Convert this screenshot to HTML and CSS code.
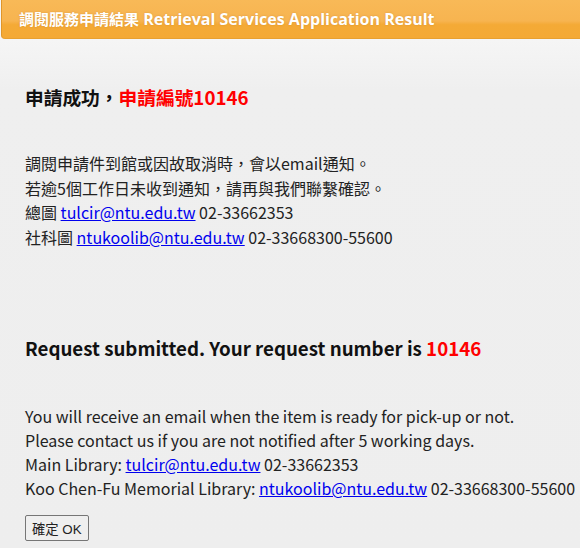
FILE: index.html
```html
<!DOCTYPE html>
<html lang="zh-Hant">
<head>
<meta charset="utf-8">
<title>調閱服務申請結果</title>
<link rel="stylesheet" href="styles.css">
</head>
<body>
<div class="page">
  <div class="header"><span class="zh">調閱服務申請結果</span> <span class="en">Retrieval Services Application Result</span></div>
  <div class="content">
    <h3 class="result">申請成功，<span class="red">申請編號10146</span></h3>
    <p class="info">調閱申請件到館或因故取消時，會以email通知。<br>若逾5個工作日未收到通知，請再與我們聯繫確認。<br>總圖 <a href="#">tulcir@ntu.edu.tw</a> 02-33662353<br>社科圖 <a href="#">ntukoolib@ntu.edu.tw</a> 02-33668300-55600</p>
    <h3 class="result result-en">Request submitted. Your request number is <span class="red">10146</span></h3>
    <p class="info info-en">You will receive an email when the item is ready for pick-up or not.<br>Please contact us if you are not notified after 5 working days.<br>Main Library: <a href="#">tulcir@ntu.edu.tw</a> 02-33662353<br>Koo Chen-Fu Memorial Library: <a href="#">ntukoolib@ntu.edu.tw</a> 02-33668300-55600</p>
    <button class="ok" type="button">確定 OK</button>
  </div>
</div>
</body>
</html>
```
FILE: styles.css
```css
html, body {
  margin: 0;
  padding: 0;
  background: #eeeeee;
}
.page {
  min-height: 548px;
  background: linear-gradient(to bottom, #f5f5f5 40px, #efefef 90px, #eeeeee);
  font-family: "Noto Sans CJK TC", "Noto Sans", sans-serif;
  color: #222;
}
.header {
  margin-left: 1px;
  height: 39px;
  box-sizing: border-box;
  padding: 9px 0 0 17px;
  background: linear-gradient(to bottom, #f8b957 0%, #f7b450 55%, #f4aa36 65%, #f4a935 100%);
  border-left: 1px solid #e0962a;
  border-bottom: 1px solid #e8a030;
  border-bottom-left-radius: 4px;
  color: #fff;
  font-family: "Open Sans", "Noto Sans CJK TC", sans-serif;
  font-weight: bold;
  font-size: 16px;
  line-height: 20px;
  white-space: nowrap;
  text-shadow: 0 0 2px rgba(160, 90, 0, 0.35);
}
.header .zh {
  font-size: 15px;
}
.header .en {
  font-size: 16px;
}
.content {
  padding: 0 0 0 25px;
}
.result {
  margin: 44px 0 0;
  font-size: 18.72px;
  font-weight: bold;
  line-height: 28px;
  color: #111;
}
.result-en {
  margin-top: 85px;
}
.red {
  color: #ff0000;
}
.info {
  margin: 40px 0 0;
  font-size: 16px;
  line-height: 24.5px;
  color: #222;
}
.info-en {
  margin-top: 42px;
  line-height: 24px;
}
.info a {
  color: #0000ee;
}
.ok {
  display: block;
  margin-top: 15px;
  height: 26px;
  padding: 0 6px;
  font-family: "Liberation Sans", "Noto Sans CJK TC", sans-serif;
  font-size: 13.33px;
  color: #222;
  background: #efefef;
  border: 1px solid #767676;
  border-radius: 2px;
}
```
